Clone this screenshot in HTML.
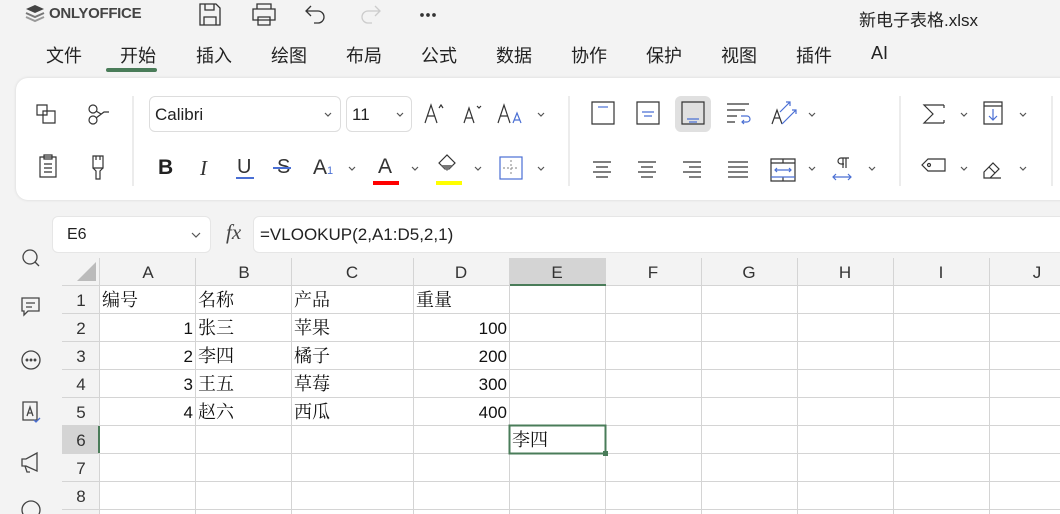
<!DOCTYPE html>
<html><head><meta charset="utf-8"><style>
*{margin:0;padding:0;box-sizing:border-box}
body{width:1060px;height:514px;overflow:hidden;background:#f3f3f3;font-family:"Liberation Sans","Noto Sans CJK SC",sans-serif;color:#333;position:relative}
.a{position:absolute}
.tab{position:absolute;top:42px;font-size:18px;color:#222}
.panel{position:absolute;left:16px;top:78px;width:1060px;height:122px;background:#fff;border-radius:12px;box-shadow:0 0 3px rgba(0,0,0,.12)}
.box{position:absolute;border:1px solid #ddd;border-radius:6px;background:#fff}
</style></head><body>
<!-- top bar -->
<svg class="a" style="left:24px;top:4px" width="22" height="20" viewBox="0 0 22 20"><path d="M11 1 2 5l9 4 9-4z" fill="#444"/><path d="M2 9l9 4 9-4" fill="none" stroke="#777" stroke-width="2"/><path d="M2 13l9 4 9-4" fill="none" stroke="#999" stroke-width="2"/></svg>
<div class="a" style="left:49px;top:5px;font-size:15px;font-weight:bold;color:#444;letter-spacing:-.3px">ONLYOFFICE</div>
<svg class="a" style="left:198px;top:0" width="260" height="30" viewBox="0 0 260 30" fill="none" stroke="#333" stroke-width="1.3">
<path d="M2 4h16l4 4v17H2z M7 4v6h9V4 M6 25v-8h12v8"/>
<g transform="translate(7 0)"><path d="M52 9V4h14v5 M48 9h22v11H48z M53 17h12v8H53z"/></g>
<path d="M113 6l-5 5 5 5 M108 11h12a6 6 0 010 12h-4"/>
<g transform="translate(-20 0)"><path d="M197 6l5 5-5 5 M202 11h-12a6 6 0 000 12h4" stroke="#ccc"/></g>
<g transform="translate(-12 0)"><circle cx="236" cy="15" r="1.2" fill="#333"/><circle cx="242" cy="15" r="1.2" fill="#333"/><circle cx="248" cy="15" r="1.2" fill="#333"/></g>
</svg>
<div class="a" style="left:859px;top:6px;font-size:17px;color:#222">新电子表格.xlsx</div>
<div class="tab" style="left:46px">文件</div>
<div class="tab" style="left:120px">开始</div>
<div class="a" style="left:106px;top:68px;width:51px;height:4px;border-radius:2px;background:#4a7c59"></div>
<div class="tab" style="left:196px">插入</div>
<div class="tab" style="left:271px">绘图</div>
<div class="tab" style="left:346px">布局</div>
<div class="tab" style="left:421px">公式</div>
<div class="tab" style="left:496px">数据</div>
<div class="tab" style="left:571px">协作</div>
<div class="tab" style="left:646px">保护</div>
<div class="tab" style="left:721px">视图</div>
<div class="tab" style="left:796px">插件</div>
<div class="tab" style="left:871px;top:43px">AI</div>
<!-- toolbar panel -->
<div class="panel"></div>
<div class="box" style="left:149px;top:96px;width:192px;height:36px"></div>
<div class="a" style="left:155px;top:105px;font-size:17px;color:#222">Calibri</div>
<div class="box" style="left:346px;top:96px;width:66px;height:36px"></div>
<div class="a" style="left:352px;top:105px;font-size:17px;color:#222">11</div>
<div class="a" style="left:675px;top:96px;width:36px;height:36px;background:#e0e0e0;border-radius:6px"></div>
<svg class="a" style="left:0;top:78px" width="1060" height="122" viewBox="0 78 1060 122" fill="none" stroke="#333" stroke-width="1.2">
<g stroke="#e0e0e0"><path d="M133 96v90 M569 96v90 M900 96v90 M1052 96v90"/></g>
<path d="M37 105h10v10H37z M43 111h12v12H43z"/>
<circle cx="93" cy="109" r="4"/><circle cx="93" cy="120" r="4"/><path d="M96 118l8-6h5 M96 111l5 3"/>
<path d="M40 157h16v20H40z M44 155h8v4h-8z M44 164h8 M44 168h8 M44 172h8"/>
<path d="M93 156h10v12H93z M96 156v4 M100 156v4 M93 168l3 3v8h4v-8l3-3"/>
<g stroke="#555"><path d="M325 113l3 3 3-3 M397 113l3 3 3-3 M538 113l3 3 3-3 M349 167l3 3 3-3 M412 167l3 3 3-3 M475 167l3 3 3-3 M538 167l3 3 3-3 M809 113l3 3 3-3 M809 167l3 3 3-3 M869 167l3 3 3-3 M961 113l3 3 3-3 M1020 113l3 3 3-3 M961 167l3 3 3-3 M1020 167l3 3 3-3"/></g>
<path d="M425 123l6-18 6 18 M427 116h8 M439 108l2-3 2 3"/>
<path d="M464 123l5-15 5 15 M466 118h6 M477 106l2 2 2-2" />
<path d="M498 123l6-18 6 18 M500 116h8"/><path d="M513 123l4-10 4 10 M514 120h6" stroke="#4a6fd4"/>
<path d="M592 102h22v22h-22z"/><path d="M598 107h10" stroke="#4a6fd4"/>
<path d="M637 102h22v22h-22z"/><path d="M642 112h12 M644 116h8" stroke="#4a6fd4"/>
<path d="M682 102h22v22h-22z"/><path d="M687 119h12 M689 122h8" stroke="#4a6fd4"/>
<path d="M727 104h22 M727 110h18 M727 116h10 M727 122h8"/><path d="M741 116h6a3 3 0 010 6h-5 M744 120l-2 2 2 2" stroke="#4a6fd4"/>
<path d="M772 124l5-14 5 14 M774 118h6"/><path d="M780 112l10-10 M786 102h4v4 M782 124l14-14 M792 110h4v4" stroke="#4a6fd4"/>
<path d="M593 162h18 M596 167h12 M593 172h18 M596 177h12"/>
<path d="M638 162h18 M641 167h12 M638 172h18 M641 177h12"/>
<path d="M683 162h18 M689 167h12 M683 172h18 M689 177h12"/>
<path d="M728 162h20 M728 167h20 M728 172h20 M728 177h20"/>
<path d="M771 159h24v22h-24z M783 159v4 M783 177v4 M771 163h24" /><path d="M771 177h24 M775 170h16 M777 168l-2 2 2 2 M789 168l2 2-2 2" stroke="#4a6fd4"/>
<path d="M843 158v10 M846 158v10 M849 158h-8a3 3 0 000 6h3"/><path d="M833 177h18 M836 174l-3 3 3 3 M848 174l3 3-3 3" stroke="#4a6fd4"/>
<path d="M944 105h-20l9 9-9 9h20 M944 105v3 M944 123v-3"/>
<path d="M984 102h18v22h-18z M984 106h18"/><path d="M993 109v11 M989 116l4 4 4-4" stroke="#4a6fd4"/>
<path d="M928 159h17v12h-17l-6-6z"/><circle cx="929" cy="165" r="1.5"/>
<path d="M984 172l9-9 6 6-9 9h-6z M989 167l6 6 M984 178h17"/>
<rect x="500" y="157" width="22" height="22" stroke="#4a6fd4"/><path d="M511 160v16 M503 168h16" stroke="#999" stroke-dasharray="2 2"/>
<path d="M439 163l8-8 8 8-6 6h-4z"/><path d="M441 165l6 6 6-6z" fill="#777" stroke="none"/>
</svg>
<div class="a" style="left:158px;top:156px;font-size:21px;font-weight:bold;color:#222">B</div>
<div class="a" style="left:200px;top:156px;font-size:21px;font-style:italic;color:#333;font-family:'Liberation Serif',serif">I</div>
<div class="a" style="left:237px;top:156px;font-size:20px;color:#333">U</div>
<div class="a" style="left:236px;top:177px;width:18px;height:1.5px;background:#4a6fd4"></div>
<div class="a" style="left:277px;top:156px;font-size:20px;color:#333">S</div>
<div class="a" style="left:273px;top:167px;width:18px;height:1.5px;background:#4a6fd4"></div>
<div class="a" style="left:313px;top:156px;font-size:21px;color:#333">A<span style="font-size:11px;color:#4a6fd4">1</span></div>
<div class="a" style="left:378px;top:155px;font-size:21px;color:#333">A</div>
<div class="a" style="left:373px;top:181px;width:26px;height:4px;background:#f00"></div>
<div class="a" style="left:436px;top:181px;width:26px;height:4px;background:#ff0"></div>
<!-- formula bar -->
<div class="box" style="left:52px;top:216px;width:159px;height:37px;border-color:#e6e6e6"></div>
<div class="a" style="left:67px;top:226px;font-size:16px;color:#222">E6</div>
<svg class="a" style="left:190px;top:231px" width="12" height="8"><path d="M2 2l4 4 4-4" fill="none" stroke="#555" stroke-width="1.2"/></svg>
<div class="a" style="left:226px;top:220px;font-size:21px;font-style:italic;font-family:'Liberation Serif',serif;color:#444">fx</div>
<div class="box" style="left:253px;top:216px;width:820px;height:37px;border-color:#e6e6e6"></div>
<div class="a" style="left:260px;top:225px;font-size:17px;color:#222">=VLOOKUP(2,A1:D5,2,1)</div>
<!-- left rail -->
<svg class="a" style="left:16px;top:244px" width="30" height="270" viewBox="0 244 30 270" fill="none" stroke="#444" stroke-width="1.3">
<circle cx="14" cy="257" r="7"/><path d="M19 262l4 4"/>
<path d="M6 298h17v13H12l-4 4v-4H6z M10 303h9 M10 307h6"/>
<circle cx="15" cy="360" r="9"/><circle cx="11" cy="360" r=".8" fill="#444"/><circle cx="15" cy="360" r=".8" fill="#444"/><circle cx="19" cy="360" r=".8" fill="#444"/>
<path d="M7 402h14v18H7z"/><path d="M11 416l3-9 3 9 M12 413h4"/><path d="M18 420l2 2 4-4" stroke="#4a6fd4"/>
<path d="M6 459h4l11-6v18l-11-5H6z M9 466l2 6h3"/>
<circle cx="15" cy="510" r="9"/>
</svg>
<!-- grid -->
<svg class="a" style="left:0;top:0" width="1060" height="514" viewBox="0 0 1060 514" font-family="Liberation Sans, sans-serif">
<rect x="62" y="258" width="998" height="28" fill="#f3f3f3"/>
<rect x="62" y="258" width="38" height="256" fill="#f3f3f3"/>
<rect x="510" y="258" width="96" height="27" fill="#d4d4d4"/>
<rect x="62" y="426" width="37" height="27" fill="#d4d4d4"/>
<rect x="100" y="286" width="960" height="228" fill="#fff"/>
<path d="M96 262v19H77z" fill="#bbb"/>
<g stroke="#d4d4d4" stroke-width="1">
<path d="M99.5 258v256 M195.5 258v256 M291.5 258v256 M413.5 258v256 M509.5 258v256 M605.5 258v256 M701.5 258v256 M797.5 258v256 M893.5 258v256 M989.5 258v256"/>
<path d="M62 285.5h998 M62 313.5h998 M62 341.5h998 M62 369.5h998 M62 397.5h998 M62 425.5h998 M62 453.5h998 M62 481.5h998 M62 509.5h998"/>
</g>
<path d="M510 285h96" stroke="#4a7c59" stroke-width="2"/>
<path d="M99 426v27" stroke="#4a7c59" stroke-width="2"/>
<rect x="509.5" y="425.5" width="96" height="28" fill="none" stroke="#4a7c59" stroke-width="2"/>
<rect x="603" y="451" width="5" height="5" fill="#4a7c59"/>
<g font-size="17" fill="#333" text-anchor="middle">
<text x="148" y="278">A</text><text x="244" y="278">B</text><text x="352" y="278">C</text><text x="461" y="278">D</text><text x="557" y="278">E</text><text x="653" y="278">F</text><text x="749" y="278">G</text><text x="845" y="278">H</text><text x="941" y="278">I</text><text x="1037" y="278">J</text>
<text x="81" y="306">1</text><text x="81" y="334">2</text><text x="81" y="362">3</text><text x="81" y="390">4</text><text x="81" y="418">5</text><text x="81" y="446">6</text><text x="81" y="474">7</text><text x="81" y="502">8</text>
</g>
<g font-size="17" fill="#111" text-anchor="end">
<text x="193" y="334">1</text><text x="193" y="362">2</text><text x="193" y="390">3</text><text x="193" y="418">4</text>
<text x="507" y="334">100</text><text x="507" y="362">200</text><text x="507" y="390">300</text><text x="507" y="418">400</text>
</g>
<g font-size="18" fill="#111" font-family="Noto Serif CJK SC, serif">
<text x="102" y="306">编号</text><text x="198" y="306">名称</text><text x="294" y="306">产品</text><text x="416" y="306">重量</text>
<text x="198" y="334">张三</text><text x="294" y="334">苹果</text>
<text x="198" y="362">李四</text><text x="294" y="362">橘子</text>
<text x="198" y="390">王五</text><text x="294" y="390">草莓</text>
<text x="198" y="418">赵六</text><text x="294" y="418">西瓜</text>
<text x="512" y="446">李四</text>
</g>
</svg>
</body></html>
